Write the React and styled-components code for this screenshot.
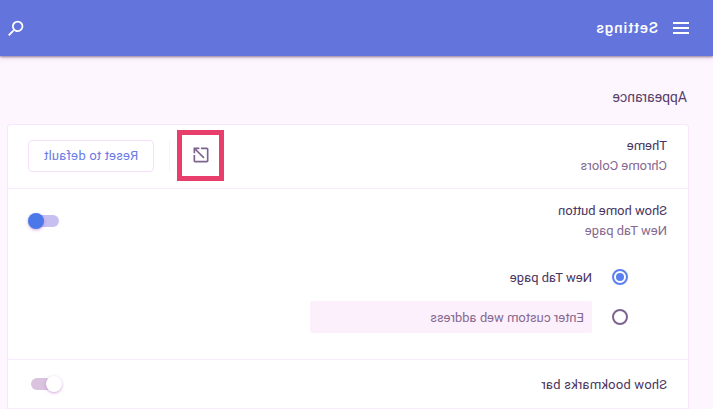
import React from 'react';
import styled, { createGlobalStyle } from 'styled-components';

const GlobalStyle = createGlobalStyle`
  html, body {
    margin: 0;
    padding: 0;
    height: 100%;
    overflow: hidden;
    background: #fef6ff;
  }
`;

// the whole screenshot is a mirror image, so the page is built normally and flipped once
const Page = styled.div`
  position: relative;
  width: 713px;
  height: 409px;
  overflow: hidden;
  transform: scaleX(-1);
  background: #fef6ff;
  font-family: Roboto, 'Liberation Sans', sans-serif;
  font-size: 13px;
  color: #4a3560;
`;

const Toolbar = styled.header`
  height: 56px;
  display: flex;
  align-items: center;
  justify-content: space-between;
  padding: 0 5px 0 24px;
  background: #6374dd;
  color: #fff;
  box-shadow: 0 1px 2px rgba(80, 50, 90, 0.55), 0 2px 5px rgba(120, 90, 130, 0.2);
`;

const ToolbarLeft = styled.div`
  display: flex;
  align-items: center;
  gap: 15px;
`;

const ToolbarTitle = styled.span`
  font-size: 15px;
  font-weight: 500;
  letter-spacing: 0.9px;
`;

const Content = styled.main`
  padding: 33px 7px 0 25px;
`;

const SectionTitle = styled.h2`
  margin: 0 0 18px;
  padding-left: 1px;
  font-size: 14px;
  line-height: 17px;
  font-weight: 400;
  color: #55406b;
`;

const Card = styled.section`
  margin-left: -1px;
  background: #fff;
  border: 1px solid #f8e6fd;
  border-bottom: 0;
  border-radius: 4px 4px 0 0;
`;

const Row = styled.div`
  display: flex;
  align-items: center;
  justify-content: space-between;
  height: ${p => p.$height}px;
  box-sizing: border-box;
  padding: 0 20px ${p => p.$lift || 0}px 21px;
  border-bottom: 1px solid #f9ebfd;
`;

const Labels = styled.div`
  display: flex;
  flex-direction: column;
  gap: 3px;
`;

const Label = styled.div`
  line-height: 17px;
`;

const BookmarksLabel = styled(Label)`
  letter-spacing: 0.2px;
`;

const SubLabel = styled.div`
  line-height: 17px;
  color: #86698f;
`;

const Actions = styled.div`
  display: flex;
  align-items: center;
  height: 32px;
`;

const OpenButton = styled.div`
  display: flex;
  align-items: center;
  justify-content: center;
  width: 20px;
  margin: -1px 21px 0 0;
  color: #7d6390;
`;

const Divider = styled.div`
  width: 1px;
  height: 32px;
  margin-right: 15px;
  background: #fbf0fd;
`;

const ResetButton = styled.button`
  width: 126px;
  height: 32px;
  padding: 0;
  background: #fff;
  border: 1px solid #f6dffb;
  border-radius: 4px;
  color: #6a7be6;
  font: 400 13px Roboto, 'Liberation Sans', sans-serif;
  letter-spacing: 0.2px;
`;

const Switch = styled.div`
  position: relative;
  flex: none;
  width: 28px;
  height: 12px;
  margin-right: 3px;
  border-radius: 6px;
  background: ${p => (p.$on ? '#c6bff0' : '#d9c3df')};
`;

const HomeSwitch = styled(Switch)`
  margin-top: 13px;
`;

const Knob = styled.div`
  position: absolute;
  top: -2px;
  ${p => (p.$on ? 'right: -3px;' : 'left: -3px;')}
  width: 16px;
  height: 16px;
  border-radius: 50%;
  background: ${p => (p.$on ? '#4a78e8' : '#fff')};
  box-shadow: 0 1px 3px rgba(170, 90, 190, 0.55);
`;

const HomeRow = styled.div`
  border-bottom: 1px solid #f9ebfd;
  height: 171px;
  box-sizing: border-box;
`;

const HomeTop = styled(Row)`
  border-bottom: 0;
  height: auto;
  padding-top: 13px;
  align-items: flex-start;
`;

const RadioGroup = styled.div`
  display: flex;
  flex-direction: column;
  gap: 8px;
  margin-top: 22px;
  padding-left: 60px;
`;

const RadioRow = styled.div`
  display: flex;
  align-items: center;
  height: 32px;
  gap: 20px;
`;

const Radio = styled.div`
  box-sizing: border-box;
  display: flex;
  align-items: center;
  justify-content: center;
  width: 16px;
  height: 16px;
  border-radius: 50%;
  border: 2px solid ${p => (p.$checked ? '#5a7ff0' : '#7d6390')};
  &::after {
    content: '';
    display: ${p => (p.$checked ? 'block' : 'none')};
    width: 8px;
    height: 8px;
    border-radius: 50%;
    background: #5a7ff0;
  }
`;

const UrlInput = styled.div`
  box-sizing: border-box;
  width: 282px;
  height: 32px;
  padding: 0 8px;
  display: flex;
  align-items: center;
  border-radius: 2px;
  background: #fcf0fd;
  color: #86698f;
`;

const Highlight = styled.div`
  position: absolute;
  left: 489px;
  top: 130px;
  width: 47px;
  height: 51px;
  box-sizing: border-box;
  border: 5px solid #e83e6b;
`;

const MenuIcon = () => (
  <svg width="16" height="12" viewBox="0 0 16 12" fill="currentColor">
    <rect width="16" height="2" />
    <rect y="5" width="16" height="2" />
    <rect y="10" width="16" height="2" />
  </svg>
);

const SearchIcon = () => (
  <svg width="21" height="21" viewBox="0 0 24 24" fill="currentColor">
    <path d="M15.5 14h-.79l-.28-.27A6.47 6.47 0 0 0 16 9.5 6.5 6.5 0 1 0 9.5 16c1.61 0 3.09-.59 4.23-1.57l.27.28v.79l5 4.99L20.49 19l-4.99-5zm-6 0C7.01 14 5 11.99 5 9.5S7.01 5 9.5 5 14 7.01 14 9.5 11.99 14 9.5 14z" />
  </svg>
);

const OpenIcon = () => (
  <svg width="20" height="20" viewBox="0 0 24 24" fill="currentColor">
    <path d="M19 19H5V5h7V3H5c-1.11 0-2 .9-2 2v14c0 1.1.89 2 2 2h14c1.1 0 2-.9 2-2v-7h-2v7zM14 3v2h3.59l-9.83 9.83 1.41 1.41L19 6.41V10h2V3h-7z" />
  </svg>
);

export default function App() {
  return (
    <Page>
      <GlobalStyle />
      <Toolbar>
        <ToolbarLeft>
          <MenuIcon />
          <ToolbarTitle>Settings</ToolbarTitle>
        </ToolbarLeft>
        <SearchIcon />
      </Toolbar>
      <Content>
        <SectionTitle>Appearance</SectionTitle>
        <Card>
          <Row $height={64} $lift={2}>
            <Labels>
              <Label>Theme</Label>
              <SubLabel>Chrome Colors</SubLabel>
            </Labels>
            <Actions>
              <OpenButton>
                <OpenIcon />
              </OpenButton>
              <Divider />
              <ResetButton>Reset to default</ResetButton>
            </Actions>
          </Row>
          <HomeRow>
            <HomeTop>
              <Labels>
                <Label>Show home button</Label>
                <SubLabel>New Tab page</SubLabel>
              </Labels>
              <HomeSwitch $on>
                <Knob $on />
              </HomeSwitch>
            </HomeTop>
            <RadioGroup>
              <RadioRow>
                <Radio $checked />
                <Label>New Tab page</Label>
              </RadioRow>
              <RadioRow>
                <Radio />
                <UrlInput>Enter custom web address</UrlInput>
              </RadioRow>
            </RadioGroup>
          </HomeRow>
          <Row $height={49}>
            <BookmarksLabel>Show bookmarks bar</BookmarksLabel>
            <Switch>
              <Knob />
            </Switch>
          </Row>
        </Card>
      </Content>
      <Highlight />
    </Page>
  );
}
